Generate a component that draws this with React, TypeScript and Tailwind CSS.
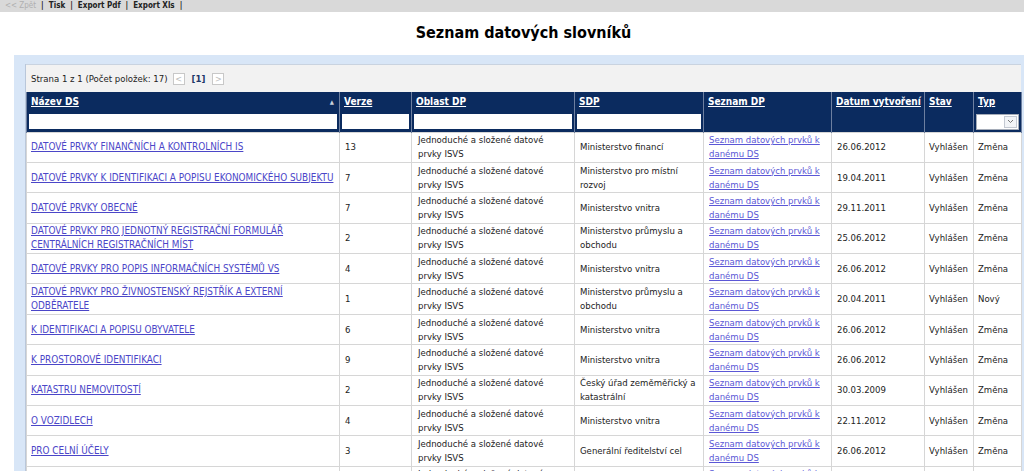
import React from "react";

type Row = {
    name: string;
    ver: string;
    sdp: string;
    date: string;
    typ: string;
};

const rows: Row[] = [
    { name: "DATOVÉ PRVKY FINANČNÍCH A KONTROLNÍCH IS", ver: "13", sdp: "Ministerstvo financí", date: "26.06.2012", typ: "Změna" },
    { name: "DATOVÉ PRVKY K IDENTIFIKACI A POPISU EKONOMICKÉHO SUBJEKTU", ver: "7", sdp: "Ministerstvo pro místní rozvoj", date: "19.04.2011", typ: "Změna" },
    { name: "DATOVÉ PRVKY OBECNÉ", ver: "7", sdp: "Ministerstvo vnitra", date: "29.11.2011", typ: "Změna" },
    { name: "DATOVÉ PRVKY PRO JEDNOTNÝ REGISTRAČNÍ FORMULÁŘ CENTRÁLNÍCH REGISTRAČNÍCH MÍST", ver: "2", sdp: "Ministerstvo průmyslu a obchodu", date: "25.06.2012", typ: "Změna" },
    { name: "DATOVÉ PRVKY PRO POPIS INFORMAČNÍCH SYSTÉMŮ VS", ver: "4", sdp: "Ministerstvo vnitra", date: "26.06.2012", typ: "Změna" },
    { name: "DATOVÉ PRVKY PRO ŽIVNOSTENSKÝ REJSTŘÍK A EXTERNÍ ODBĚRATELE", ver: "1", sdp: "Ministerstvo průmyslu a obchodu", date: "20.04.2011", typ: "Nový" },
    { name: "K IDENTIFIKACI A POPISU OBYVATELE", ver: "6", sdp: "Ministerstvo vnitra", date: "26.06.2012", typ: "Změna" },
    { name: "K PROSTOROVÉ IDENTIFIKACI", ver: "9", sdp: "Ministerstvo vnitra", date: "26.06.2012", typ: "Změna" },
    { name: "KATASTRU NEMOVITOSTÍ", ver: "2", sdp: "Český úřad zeměměřický a katastrální", date: "30.03.2009", typ: "Změna" },
    { name: "O VOZIDLECH", ver: "4", sdp: "Ministerstvo vnitra", date: "22.11.2012", typ: "Změna" },
    { name: "PRO CELNÍ ÚČELY", ver: "3", sdp: "Generální ředitelství cel", date: "26.06.2012", typ: "Změna" },
    { name: "PRO POTŘEBY STATISTIKY", ver: "2", sdp: "Český statistický úřad", date: "26.06.2012", typ: "Změna" },
];

const headers = ["Název DS", "Verze", "Oblast DP", "SDP", "Seznam DP", "Datum vytvoření", "Stav", "Typ"];
const widths = ["w-[313px]", "w-[72px]", "w-[163px]", "w-[129px]", "w-[128px]", "w-[93px]", "w-[49px]", "w-[48px]"];

export default function App() {
    return (
        <div className="h-screen overflow-hidden bg-white font-['DejaVu_Sans_Condensed','DejaVu_Sans',sans-serif] text-[9.5px] leading-[14px] text-[#222]">
            {/* top toolbar */}
            <div className="h-[12px] bg-[#d9d9d9] flex items-center pl-[5px] text-[8px] leading-none font-bold text-[#222]">
                <span className="text-[#b0b0b0] font-normal">&lt;&lt; Zpět</span>
                <span className="mx-[5px]">|</span>
                <span>Tisk</span>
                <span className="mx-[5px]">|</span>
                <span>Export Pdf</span>
                <span className="mx-[5px]">|</span>
                <span>Export Xls</span>
                <span className="mx-[5px]">|</span>
            </div>

            <h1 className="text-center font-bold text-[16px] leading-[20px] mt-[11px] pl-[23px] text-black">Seznam datových slovníků</h1>

            <div className="ml-[14px] mt-[12px] bg-[#d8e6f7] pl-[11px] pr-[3px] pt-[9px]">
                <div className="bg-white border-l border-[#b9c7da]">
                    {/* pager */}
                    <div className="h-[28px] bg-[#f2f2f2] flex items-center pl-[5px] gap-[5px] border-t border-[#c9d3e0]">
                        <span>Strana 1 z 1 (Počet položek: 17)</span>
                        <span className="w-[12px] h-[12px] border border-[#c8c8c8] bg-white text-[#bbb] text-[9px] leading-[10px] flex items-center justify-center">&lt;</span>
                        <span className="font-bold text-[#1d3768] px-[2px]">[1]</span>
                        <span className="w-[12px] h-[12px] border border-[#c8c8c8] bg-white text-[#bbb] text-[9px] leading-[10px] flex items-center justify-center">&gt;</span>
                    </div>

                    <table className="border-collapse table-fixed w-[996px]">
                        <colgroup>
                            {widths.map((w, i) => (
                                <col key={i} className={w} />
                            ))}
                        </colgroup>
                        <thead>
                            <tr className="bg-[#0b2b5f] h-[20px]">
                                {headers.map((h, i) => (
                                    <th key={h} className="text-left font-bold text-[10px] text-white px-[4px] whitespace-nowrap border-x border-[#6d7fa0] relative">
                                        <span className="underline">{h}</span>
                                        {i === 0 && (
                                            <span className="absolute right-[5px] top-[7px] text-[6px] leading-none text-[#c9d0dc]">▲</span>
                                        )}
                                    </th>
                                ))}
                            </tr>
                            <tr className="bg-[#0b2b5f] h-[20px]">
                                {[0, 1, 2, 3].map((i) => (
                                    <th key={i} className="px-[1px] border-x border-[#6d7fa0]">
                                        <div className="h-[17px] bg-white border border-[#0b2b5f]" />
                                    </th>
                                ))}
                                <th className="border-x border-[#6d7fa0]" />
                                <th className="border-x border-[#6d7fa0]" />
                                <th className="border-x border-[#6d7fa0]" />
                                <th className="px-[2px] border-x border-[#6d7fa0]">
                                    <div className="h-[16px] bg-white border border-[#a5acb8] flex justify-end items-center pr-[1px]">
                                        <span className="w-[13px] h-[12px] border border-[#c4c9d2] bg-[#f2f4f7] flex items-center justify-center">
                                            <svg width="7" height="5" viewBox="0 0 7 5">
                                                <path d="M1 1 L3.5 3.5 L6 1" fill="none" stroke="#777" strokeWidth="1" />
                                            </svg>
                                        </span>
                                    </div>
                                </th>
                            </tr>
                        </thead>
                        <tbody>
                            {rows.map((r) => (
                                <tr key={r.name} className="h-[30.4px]">
                                    <td className="border border-[#d6d6d6] pl-[4px] pr-[1px] align-middle">
                                        <a className="text-[#4b46c8] underline text-[9.9px]">{r.name}</a>
                                    </td>
                                    <td className="border border-[#d6d6d6] px-[5px]">{r.ver}</td>
                                    <td className="border border-[#d6d6d6] px-[6px]">Jednoduché a složené datové prvky ISVS</td>
                                    <td className="border border-[#d6d6d6] px-[5px]">{r.sdp}</td>
                                    <td className="border border-[#d6d6d6] px-[5px]">
                                        <a className="text-[#5b57d6] underline">Seznam datových prvků k danému DS</a>
                                    </td>
                                    <td className="border border-[#d6d6d6] px-[5px]">{r.date}</td>
                                    <td className="border border-[#d6d6d6] px-[4px]">Vyhlášen</td>
                                    <td className="border border-[#d6d6d6] px-[4px]">{r.typ}</td>
                                </tr>
                            ))}
                        </tbody>
                    </table>
                </div>
            </div>
        </div>
    );
}
